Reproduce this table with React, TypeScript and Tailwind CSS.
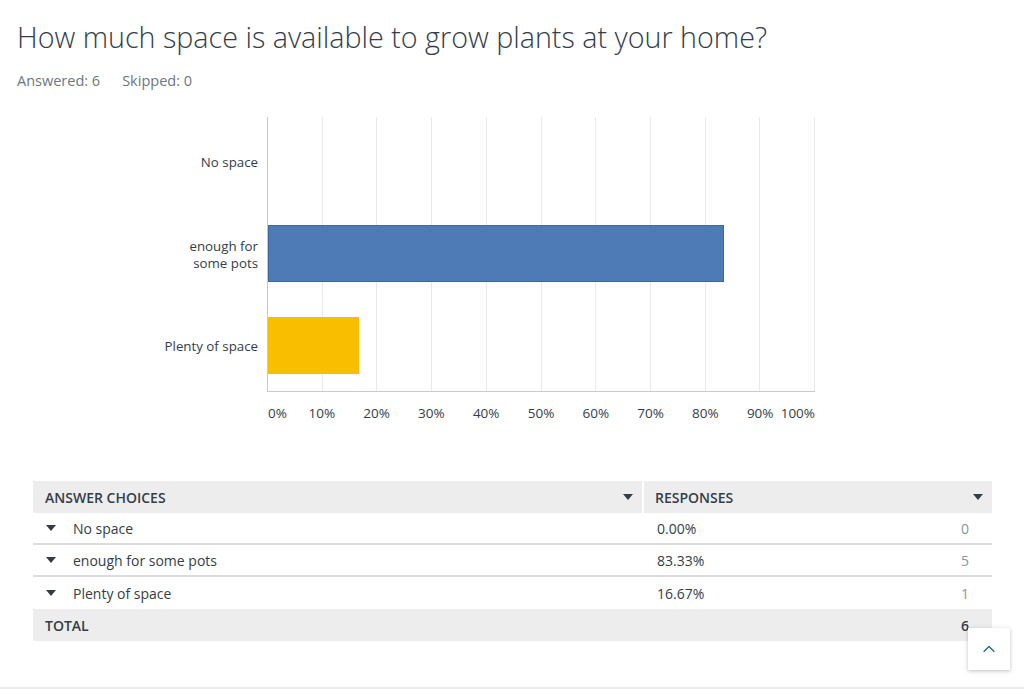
import { ChevronUp } from "lucide-react";

const rows = [
  { label: ["No space"], full: "No space", pct: 0, count: 0, color: "" },
  { label: ["enough for", "some pots"], full: "enough for some pots", pct: 83.33, count: 5, color: "blue" },
  { label: ["Plenty of space"], full: "Plenty of space", pct: 16.67, count: 1, color: "yellow" },
];

const ticks = [0, 10, 20, 30, 40, 50, 60, 70, 80, 90, 100];

function Caret() {
  return (
    <svg width="10" height="6" viewBox="0 0 10 6" className="shrink-0">
      <path d="M0 0h10L5 6z" fill="#333e48" />
    </svg>
  );
}

export default function App() {
  return (
    <div
      className="relative w-[1024px] h-[689px] bg-white overflow-hidden text-[#333e48]"
      style={{ fontFamily: "'Open Sans', 'Noto Sans', sans-serif" }}
    >
      {/* Question header */}
      <div className="px-[17px] pt-[18px]">
        <h1 className="text-[28.7px] leading-[38px] font-light text-[#333e48]">
          How much space is available to grow plants at your home?
        </h1>
        <p className="mt-[16px] text-[14.5px] leading-[18px] text-[#6b787f]">
          Answered: 6<span className="ml-[22px]">Skipped: 0</span>
        </p>
      </div>

      {/* Bar chart */}
      <div className="mt-[27px] flex">
        <div className="w-[258px] flex flex-col h-[275px]">
          {rows.map((r) => (
            <div
              key={r.full}
              className="flex-1 flex flex-col justify-center items-end text-right text-[13.3px] leading-[17px] text-[#333e48]"
            >
              {r.label.map((l) => (
                <span key={l}>{l}</span>
              ))}
            </div>
          ))}
        </div>
        <div className="ml-[9px] w-[548px]">
          <div className="relative h-[275px] border-l border-b border-[#c9c9c9]">
            {ticks.slice(1).map((t) => (
              <div
                key={t}
                className="absolute top-0 bottom-0 w-px bg-[#e9e9e9]"
                style={{ left: `calc(${t}% - 1px)` }}
              />
            ))}
            <div className="relative flex flex-col h-full">
              {rows.map((r) => (
                <div key={r.full} className="flex-1 flex items-center">
                  {r.color === "blue" && (
                    <div
                      className="h-[57px] bg-[#4e7bb5] border border-[#3d68a0]"
                      style={{ width: `${r.pct}%` }}
                    />
                  )}
                  {r.color === "yellow" && (
                    <div className="h-[57px] bg-[#f9be00]" style={{ width: `${r.pct}%` }} />
                  )}
                </div>
              ))}
            </div>
          </div>
          <div className="relative h-[42px] text-[13.5px] text-[#333e48]">
            {ticks.map((t, i) => (
              <span
                key={t}
                className={
                  i === 0
                    ? "absolute top-[11px] left-[1px]"
                    : i === ticks.length - 1
                      ? "absolute top-[11px] right-0"
                      : "absolute top-[11px] -translate-x-1/2"
                }
                style={i === 0 || i === ticks.length - 1 ? undefined : { left: `${t}%` }}
              >
                {t}%
              </span>
            ))}
          </div>
        </div>
      </div>

      {/* Responses table */}
      <div className="ml-[33px] mt-[47px] w-[959px] text-[14px]">
        <div className="flex h-[32px] bg-[#ededed] font-semibold text-[#333e48]">
          <div className="w-[611px] flex items-center justify-between pl-[12px] pr-[9px] border-r-2 border-white">
            <span>ANSWER CHOICES</span>
            <Caret />
          </div>
          <div className="flex-1 flex items-center justify-between pl-[11px] pr-[9px]">
            <span>RESPONSES</span>
            <Caret />
          </div>
        </div>
        {rows.map((r, i) => (
          <div
            key={r.full}
            className={
              i < rows.length - 1
                ? "flex h-[32px] items-center border-b-2 border-[#dcdcdc]"
                : "flex h-[32px] items-center"
            }
          >
            <div className="w-[611px] flex items-center pl-[13px]">
              <Caret />
              <span className="ml-[17px]">{r.full}</span>
            </div>
            <div className="flex-1 flex items-center justify-between pl-[13px] pr-[23px]">
              <span>{r.pct.toFixed(2)}%</span>
              <span className="text-[#8a959b]">{r.count}</span>
            </div>
          </div>
        ))}
        <div className="flex h-[32px] items-center bg-[#ededed] font-semibold">
          <div className="w-[611px] pl-[12px]">TOTAL</div>
          <div className="flex-1 text-right pr-[23px]">6</div>
        </div>
      </div>

      {/* Back to top */}
      <button className="absolute left-[968px] top-[628px] w-[42px] h-[42px] bg-white flex items-center justify-center shadow-[0_1px_4px_rgba(0,0,0,0.25)]">
        <ChevronUp size={20} strokeWidth={1.5} color="#1b6a80" />
      </button>

      <div className="absolute left-0 right-0 bottom-0 h-[2px] bg-[#ececec]" />
    </div>
  );
}
